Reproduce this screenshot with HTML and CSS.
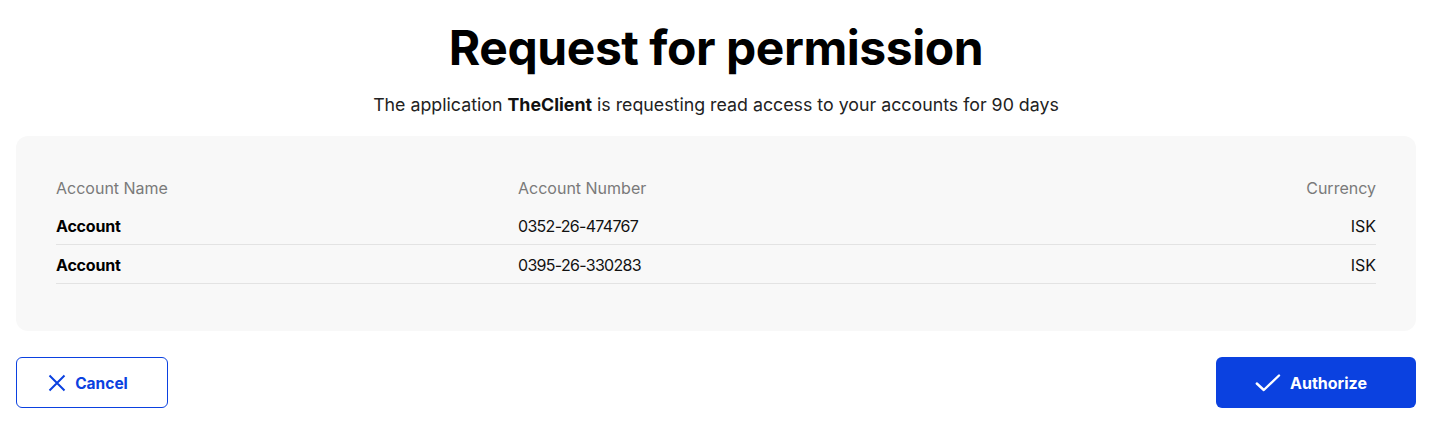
FILE: index.html
```html
<!DOCTYPE html>
<html>
<head>
<meta charset="utf-8">
<link rel="stylesheet" href="styles.css">
</head>
<body>
<main class="page">
  <h1 class="title">Request for permission</h1>
  <p class="subtitle">The application <strong>TheClient</strong> is requesting read access to your accounts for 90 days</p>
  <section class="card">
    <div class="table">
      <div class="row head">
        <span>Account Name</span>
        <span>Account Number</span>
        <span class="right">Currency</span>
      </div>
      <div class="row item">
        <span class="name">Account</span>
        <span class="num">0352-26-474767</span>
        <span class="right">ISK</span>
      </div>
      <div class="row item">
        <span class="name">Account</span>
        <span class="num">0395-26-330283</span>
        <span class="right">ISK</span>
      </div>
    </div>
  </section>
  <div class="actions">
    <button class="btn cancel">
      <svg width="18" height="18" viewBox="0 0 18 18"><path d="M1.5 1.5 L16.5 16.5 M16.5 1.5 L1.5 16.5" stroke="currentColor" stroke-width="2" fill="none"/></svg>
      Cancel
    </button>
    <button class="btn authorize">
      <svg width="26" height="20" viewBox="0 0 26 20"><path d="M1.8 10.5 L8.8 17 L24 2.5" stroke="currentColor" stroke-width="2.4" fill="none" stroke-linecap="round" stroke-linejoin="round"/></svg>
      Authorize
    </button>
  </div>
</main>
</body>
</html>
```
FILE: styles.css
```css
* { box-sizing: border-box; }
body {
  margin: 0;
  font-family: Inter, "Noto Sans", sans-serif;
  color: #000;
  background: #fff;
}
.page {
  padding: 16px 17px 0 16px;
  display: flex;
  flex-direction: column;
}
.title {
  margin: 3px 0 0;
  text-align: center;
  font-size: 48px;
  line-height: 58px;
  font-weight: 700;
  letter-spacing: -0.45px;
}
.subtitle {
  margin: 16px 0 0;
  text-align: center;
  font-size: 17.8px;
  line-height: 24px;
  color: #222;
}
.subtitle strong { font-weight: 700; color: #111; }
.card {
  margin-top: 19px;
  background: #f8f8f8;
  border-radius: 12px;
  padding: 40px 40px 47px;
}
.table { display: flex; flex-direction: column; }
.row {
  display: grid;
  grid-template-columns: 462px 1fr 200px;
  font-size: 16px;
}
.row.head {
  color: #7a7a7a;
  line-height: 24px;
  padding-bottom: 15px;
}
.row.item {
  line-height: 22px;
  padding: 0 0 7px;
  border-bottom: 1px solid #e3e3e3;
  margin-bottom: 9px;
  color: #111;
}
.row.item:last-child { margin-bottom: 0; }
.name { font-weight: 700; color: #000; letter-spacing: -0.2px; }
.num { letter-spacing: -0.7px; }
.right { text-align: right; }
.actions {
  margin-top: 26px;
  display: flex;
  justify-content: space-between;
}
.btn {
  height: 51px;
  border-radius: 6px;
  font-family: Inter, "Noto Sans", sans-serif;
  font-size: 15.5px;
  font-weight: 700;
  display: flex;
  align-items: center;
  justify-content: center;
  gap: 9px;
  padding-top: 2px;
  cursor: pointer;
}
.cancel {
  width: 152px;
  background: #fff;
  border: 1px solid #0b41e0;
  color: #0b41e0;
  padding-right: 14px;
}
.authorize {
  width: 200px;
  background: #0b41e0;
  border: none;
  color: #fff;
  font-size: 16px;
  padding-right: 16px;
}
```
